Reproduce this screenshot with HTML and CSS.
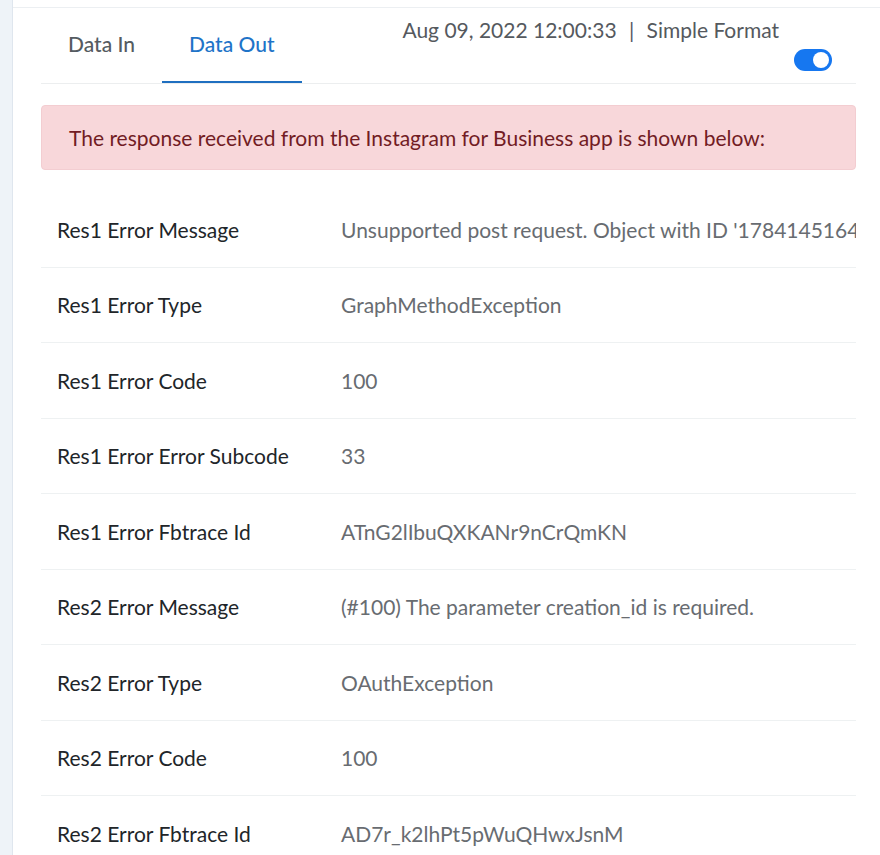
FILE: index.html
```html
<!DOCTYPE html>
<html lang="en">
<head>
  <meta charset="UTF-8" />
  <meta name="viewport" content="width=device-width, initial-scale=1" />
  <title>Task History - Data Out</title>
  <link rel="stylesheet" href="styles.css">
</head>
<body>
  <div class="panel">
    <div class="topbar"></div>

    <div class="header">
      <div class="tabs">
        <a class="tab">Data In</a>
        <a class="tab active">Data Out</a>
      </div>
      <div class="meta">
        <div class="meta-text">Aug 09, 2022 12:00:33 <span class="pipe">|</span> Simple Format</div>
        <label class="switch">
          <input type="checkbox" checked>
          <span class="slider"></span>
        </label>
      </div>
    </div>

    <div class="alert">
      The response received from the Instagram for Business app is shown below:
    </div>

    <div class="table-wrap">
      <table class="data">
        <tr><td class="key">Res1 Error Message</td><td class="val">Unsupported post request. Object with ID '17841451643320417' does not exist, cannot be loaded due to missing permissions, or does not support this operation.</td></tr>
        <tr><td class="key">Res1 Error Type</td><td class="val">GraphMethodException</td></tr>
        <tr><td class="key">Res1 Error Code</td><td class="val">100</td></tr>
        <tr><td class="key">Res1 Error Error Subcode</td><td class="val">33</td></tr>
        <tr><td class="key">Res1 Error Fbtrace Id</td><td class="val">ATnG2lIbuQXKANr9nCrQmKN</td></tr>
        <tr><td class="key">Res2 Error Message</td><td class="val">(#100) The parameter creation_id is required.</td></tr>
        <tr><td class="key">Res2 Error Type</td><td class="val">OAuthException</td></tr>
        <tr><td class="key">Res2 Error Code</td><td class="val">100</td></tr>
        <tr><td class="key">Res2 Error Fbtrace Id</td><td class="val">AD7r_k2lhPt5pWuQHwxJsnM</td></tr>
      </table>
    </div>
  </div>
</body>
</html>
```

FILE: styles.css
```css
body {
  margin: 0;
  background-color: #eef3f8;
  font-family: Lato, "Open Sans", sans-serif;
  color: #212529;
}
.panel {
  margin-left: 12px;
  border-left: 1px solid #dfe6ee;
  background-color: #fff;
  min-height: 855px;
  padding: 0 24px 0 28px;
  overflow: hidden;
}
.topbar {
  height: 7px;
  margin: 0 -24px 0 -28px;
  border-bottom: 1px solid #eceff2;
}
.header {
  display: flex;
  height: 75px;
  border-bottom: 1px solid #eceeef;
}
.tabs {
  display: flex;
  align-items: stretch;
}
.tab {
  display: flex;
  align-items: center;
  padding: 0 27px 2px;
  font-size: 21px;
  font-weight: 500;
  color: #555b61;
  cursor: pointer;
  border-bottom: 2px solid transparent;
}
.tab.active {
  color: #1f74c8;
  border-bottom-color: #1f6fc0;
}
.meta {
  margin-left: auto;
  display: flex;
  flex-direction: column;
  align-items: flex-end;
  padding-top: 9px;
  padding-right: 24px;
}
.meta-text {
  margin-right: 53px;
  font-size: 21px;
  color: #55595e;
}
.pipe {
  margin: 0 7px;
}
.switch {
  position: relative;
  display: inline-block;
  width: 38px;
  height: 22px;
  margin-top: 7px;
}
.switch input {
  display: none;
}
.slider {
  position: absolute;
  inset: 0;
  background-color: #1677f0;
  border-radius: 11px;
}
.slider::after {
  content: "";
  position: absolute;
  top: 3px;
  right: 3px;
  width: 16px;
  height: 16px;
  border-radius: 50%;
  background-color: #fff;
}
.alert {
  margin-top: 21px;
  height: 63px;
  display: flex;
  align-items: center;
  padding-left: 27px;
  background-color: #f8d7da;
  border: 1px solid #f3cdd1;
  border-radius: 4px;
  color: #721c24;
  font-size: 21px;
}
.table-wrap {
  margin-top: 22px;
  overflow: hidden;
}
.data {
  border-collapse: collapse;
  width: 100%;
  table-layout: fixed;
  font-size: 21px;
}
.data td {
  height: 74.5px;
  padding: 0 16px;
  border-bottom: 1px solid #eef1f2;
  white-space: nowrap;
  overflow: hidden;
}
.data .key {
  width: 252px;
  color: #212529;
}
.data .val {
  color: #686c71;
}
```
